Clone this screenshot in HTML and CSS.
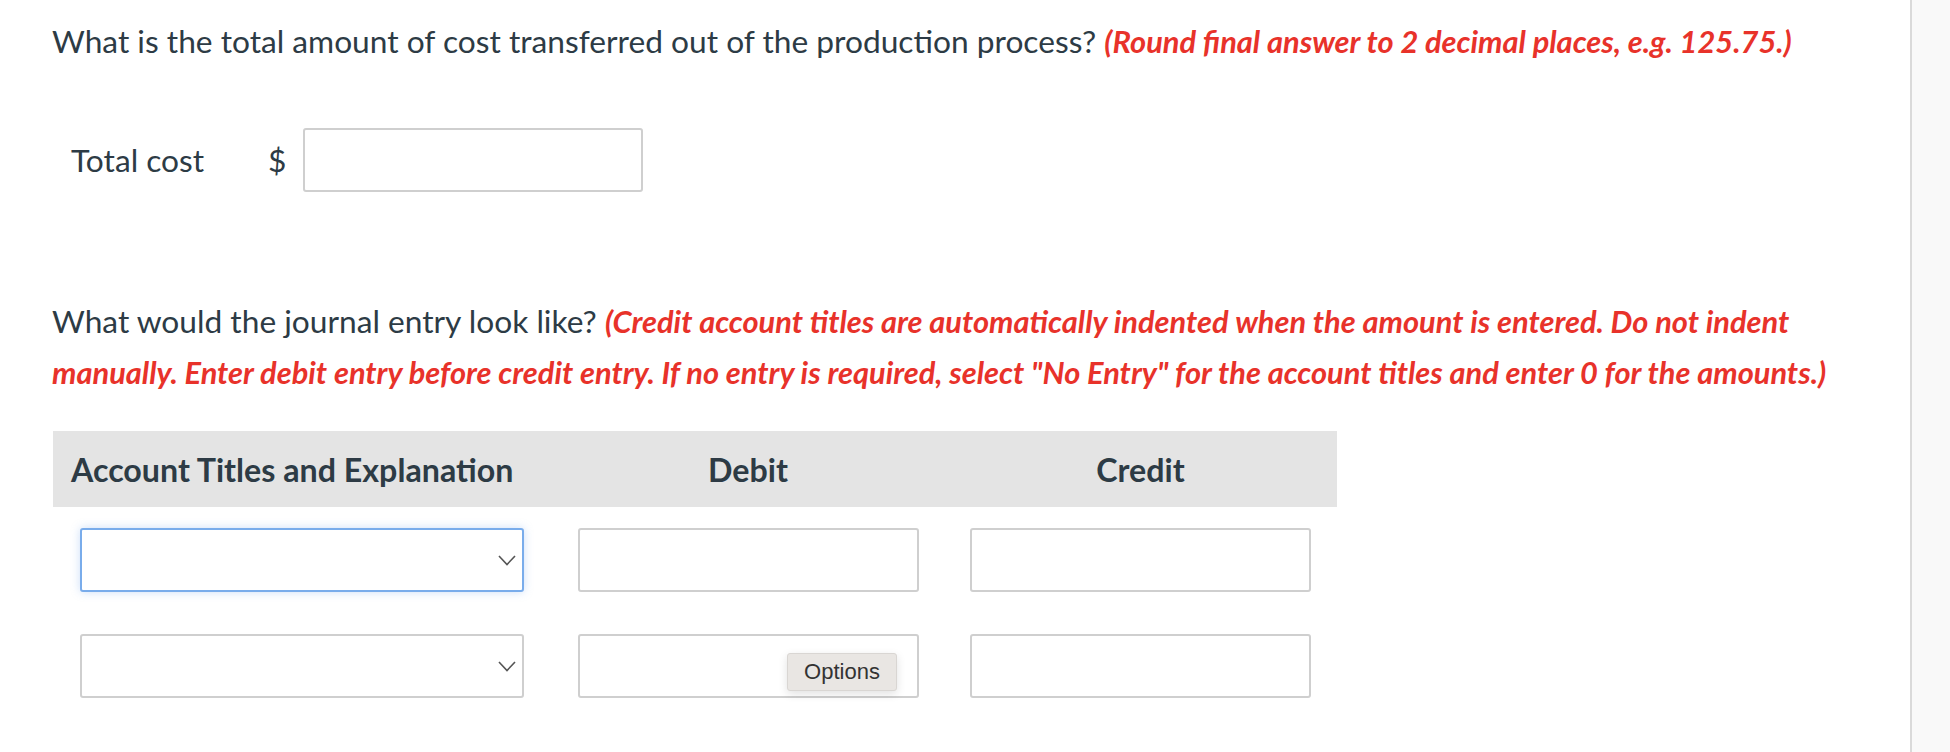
FILE: index.html
```html
<!DOCTYPE html>
<html lang="en">
<head>
<meta charset="utf-8">
<title>Journal entry question</title>
<link rel="stylesheet" href="styles.css">
</head>
<body>
<div class="page">
  <main class="main">
    <p class="question q1">What is the total amount of cost transferred out of the production process? <em class="hint">(Round final answer to 2 decimal places, e.g. 125.75.)</em></p>

    <div class="total-row">
      <span class="total-label">Total cost</span>
      <span class="currency">$</span>
      <span class="field total-field"></span>
    </div>

    <p class="question q2">What would the journal entry look like? <em class="hint">(Credit account titles are automatically indented when the amount is entered. Do not indent manually. Enter debit entry before credit entry. If no entry is required, select "No Entry" for the account titles and enter 0 for the amounts.)</em></p>

    <div class="journal">
      <div class="jhead jh-title">Account Titles and Explanation</div>
      <div class="jhead jh-center">Debit</div>
      <div class="jhead jh-center">Credit</div>

      <div class="jcell jc-title">
        <span class="select focused">
          <svg class="chev" width="18" height="11" viewBox="0 0 18 11"><polyline points="1,1 9,9.5 17,1" fill="none" stroke="#555" stroke-width="1.6"/></svg>
        </span>
      </div>
      <div class="jcell"><span class="field amount"></span></div>
      <div class="jcell"><span class="field amount"></span></div>

      <div class="jcell jc-title">
        <span class="select">
          <svg class="chev" width="18" height="11" viewBox="0 0 18 11"><polyline points="1,1 9,9.5 17,1" fill="none" stroke="#555" stroke-width="1.6"/></svg>
        </span>
      </div>
      <div class="jcell debit-cell">
        <span class="field amount"></span>
        <span class="options">Options</span>
      </div>
      <div class="jcell"><span class="field amount"></span></div>
    </div>
  </main>
  <aside class="sidebar"></aside>
</div>
</body>
</html>
```

FILE: styles.css
```css
html, body {
  margin: 0;
  padding: 0;
  background: #ffffff;
}

body {
  font-family: Lato, "Open Sans", sans-serif;
  color: #2d3b45;
}

.page {
  display: flex;
  height: 752px;
  overflow: hidden;
}

.main {
  flex: 1;
  padding: 16px 50px 0 52px;
}

.sidebar {
  width: 38px;
  border-left: 2px solid #dadada;
  background: #f9f9f9;
}

.question {
  margin: 0;
  font-size: 31.7px;
  line-height: 50px;
}

.hint {
  color: #e8322a;
  font-weight: 700;
  font-style: italic;
  font-size: 0.972em;
}

.total-row {
  display: flex;
  align-items: center;
  margin-top: 61px;
  padding-left: 19px;
  font-size: 31.7px;
}

.total-label {
  width: 197px;
}

.currency {
  width: 35px;
}

.field {
  display: block;
  box-sizing: border-box;
  height: 64px;
  border: 2px solid #cfcfcf;
  border-radius: 3px;
  background: #fff;
}

.total-field {
  width: 340px;
}

.q2 {
  margin-top: 104px;
}

.journal {
  display: grid;
  grid-template-columns: 499px 392px 393px;
  margin-top: 33px;
  margin-left: 1px;
}

.jhead {
  background: #e4e4e4;
  height: 76px;
  display: flex;
  align-items: center;
  font-size: 32.2px;
  font-weight: 700;
}

.jh-title {
  padding-left: 18px;
}

.jh-center {
  justify-content: center;
}

.jcell {
  padding: 21px 0;
  display: flex;
  justify-content: center;
  position: relative;
}

.jc-title {
  justify-content: flex-start;
  padding-left: 27px;
}

.select {
  box-sizing: border-box;
  width: 444px;
  height: 64px;
  border: 2px solid #cfcfcf;
  border-radius: 3px;
  background: #fff;
  display: flex;
  align-items: center;
  justify-content: flex-end;
  padding-right: 6px;
}

.select.focused {
  border-color: #79aceb;
  box-shadow: 0 0 10px rgba(110, 160, 235, 0.35);
}

.amount {
  width: 341px;
}

.options {
  position: absolute;
  left: 235px;
  top: 40px;
  box-sizing: border-box;
  width: 110px;
  height: 38px;
  display: flex;
  align-items: center;
  justify-content: center;
  background: #e9e6e3;
  border: 1px solid #d9d6d3;
  border-radius: 3px;
  box-shadow: 0 3px 10px rgba(0, 0, 0, 0.12);
  font-family: "Liberation Sans", Arial, sans-serif;
  font-size: 22px;
  color: #333;
}
```
